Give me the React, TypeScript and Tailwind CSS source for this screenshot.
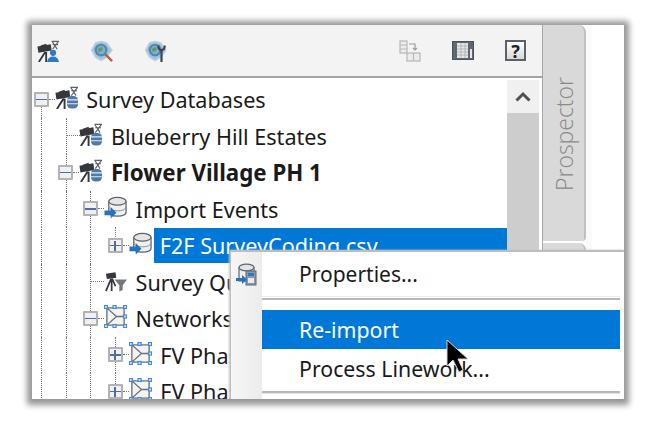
import React from "react";
import { clsx } from "clsx";

const ScopeParts = () => (
  <g>
    <path d="M0.5 7 L15 4.5 L16 11.5 L1.5 14 Z" fill="#34383d" />
    <path d="M4 6 L10 4 L10.5 6 L4.5 7.5 Z" fill="#34383d" />
    <path d="M9 13 L2 24 M10 13 L10 24" stroke="#34383d" strokeWidth="2" fill="none" />
    <path d="M16 1.5 H24 M17 5 H23 M16.5 1.5 L22 10 M23.5 1.5 L17 10" stroke="#5e6267" strokeWidth="1.2" fill="none" />
  </g>
);

const ScopeDbIcon = () => (
  <svg width="23" height="23" viewBox="0 0 24 24" className="shrink-0">
    <ScopeParts />
    <rect x="12.5" y="10.5" width="11.5" height="13" rx="4.5" fill="#4f7aa8" />
    <path d="M12.5 14.5 H24 M12.5 18.5 H24" stroke="#e2ebf4" strokeWidth="1.1" />
  </svg>
);

const ScopeUserIcon = () => (
  <svg width="22" height="22" viewBox="0 0 24 24" className="shrink-0">
    <ScopeParts />
    <circle cx="17.5" cy="14" r="3.4" fill="#2e78c4" />
    <path d="M11 24 Q12 18 17.5 18 Q23 18 24 24 Z" fill="#2e78c4" />
  </svg>
);

const ScopeFilterIcon = () => (
  <svg width="23" height="23" viewBox="0 0 24 24" className="shrink-0">
    <path d="M2 5 L12 3.5 L12.8 9 L3 10.5 Z" fill="#34383d" />
    <path d="M7.5 10 L2 23 M8 10 L8 23 M8.5 10 L12 18" stroke="#34383d" strokeWidth="1.8" fill="none" />
    <path d="M11 11 H24 L19.5 17 V22 L16 23.5 V17 Z" fill="#74787d" />
  </svg>
);

const DbArrowIcon = () => (
  <svg width="23" height="23" viewBox="0 0 24 24" className="shrink-0">
    <path d="M5 5 V17 Q5 21 14 21 Q23 21 23 17 V5" fill="#f0f0f0" stroke="#5f6368" strokeWidth="1.3" />
    <ellipse cx="14" cy="5.5" rx="9" ry="4" fill="#e5e5e5" stroke="#5f6368" strokeWidth="1.3" />
    <path d="M5 11.5 Q6 15.5 14 15.5 Q22 15.5 23 11.5" fill="none" stroke="#8a8d91" strokeWidth="1" />
    <path d="M0.5 15 H7 V11.5 L13 17.5 L7 23.5 V20 H0.5 Z" fill="#2672bd" />
  </svg>
);

const NetworkIcon = () => (
  <svg width="23" height="23" viewBox="0 0 24 24" className="shrink-0">
    <path d="M3 3 H21 V21 H3 Z M3 3 L13 12 L3 21 M13 12 H21" fill="#f3f3f3" stroke="#6d7074" strokeWidth="1.4" />
    {[
      [2, 2],
      [11, 2],
      [22, 2],
      [22, 12],
      [22, 22],
      [11, 22],
      [2, 22],
    ].map(([cx, cy]) => (
      <rect key={`${cx}-${cy}`} x={cx - 1.6} y={cy - 1.6} width="3.2" height="3.2" fill="#cfe4fa" stroke="#3f8de0" strokeWidth="1.3" />
    ))}
  </svg>
);

const DiamondIcon = ({ wrench }: { wrench?: boolean }) => (
  <svg width="22" height="22" viewBox="0 0 24 24" className="shrink-0">
    <path d="M11 1.5 L17 3 L23 11 L17 19 L11 22.5 L5 19 L0.5 11 L5 3 Z" fill="#a3c2d9" stroke="#bfd3e2" strokeWidth="1.5" strokeLinejoin="round" />
    <circle cx="11" cy="11" r="7" fill="#4f89b2" />
    <circle cx="11" cy="11" r="4.6" fill="#7fb0cf" />
    <path d="M7.5 10 Q10 7 13 8.5 L12 12 L8.5 13 Z" fill="#5d9a68" />
    {wrench ? (
      <path d="M18 10 V24 M14.5 6 Q14.5 11 18 11 Q21.5 11 21.5 6" fill="none" stroke="#3d4650" strokeWidth="2.4" />
    ) : (
      <path d="M15.5 15.5 L23 23" stroke="#b5623a" strokeWidth="2.6" />
    )}
  </svg>
);

const TransferIcon = () => (
  <svg width="22" height="22" viewBox="0 0 22 22" className="shrink-0" fill="#ececec" stroke="#b8b8b8" strokeWidth="1.2">
    <rect x="1" y="1" width="7" height="12" />
    <path d="M1 5 H8 M1 9 H8" />
    <rect x="8" y="13" width="13" height="8" />
    <path d="M14.5 13 V21" />
    <path d="M10 4 H16 V10 M14 8 L16 10 L18 8" fill="none" stroke="#9a9a9a" />
  </svg>
);

const PanelIcon = () => (
  <svg width="22" height="19" viewBox="0 0 22 19" className="shrink-0">
    <rect x="0.5" y="0.5" width="21" height="18" fill="#5f6770" stroke="#4c535b" />
    <rect x="5" y="2" width="11" height="15" fill="#e6e6e6" />
    <path d="M5 5 H16 M5 8 H16 M5 11 H16 M5 14 H16 M9 2 V17 M13 2 V17" stroke="#a8adb2" strokeWidth="0.8" />
    <rect x="18" y="8" width="2" height="9" fill="#e6e6e6" />
  </svg>
);

const MenuDbIcon = () => (
  <svg width="21" height="24" viewBox="0 0 21 24" className="shrink-0">
    <path d="M3 4 V18 H18 V4" fill="#ededed" stroke="#62666b" strokeWidth="1.2" />
    <ellipse cx="10.5" cy="4.5" rx="7.5" ry="3.3" fill="#e3e3e3" stroke="#62666b" strokeWidth="1.2" />
    <rect x="10" y="8" width="10" height="14" fill="#8b97a5" stroke="#5d6873" />
    <rect x="12" y="10" width="6" height="3" fill="#2f78c2" />
    <rect x="12" y="15" width="6" height="5" fill="#e8ecf0" />
    <path d="M0 15 H6 V12 L11 16.5 L6 21 V18 H0 Z" fill="#2672bd" />
  </svg>
);

const Toggle = ({ open }: { open: boolean }) => (
  <div className="relative z-10 ml-[1.5px] flex h-[15px] w-[15px] shrink-0 items-center justify-center rounded-[1px] border-2 border-[#b3b3b3] bg-[#f0f0f0]">
    <div className="relative h-[9px] w-[11px]">
      <div className="absolute left-0 top-[4px] h-[1.5px] w-[11px] bg-[#4a6ea8]" />
      {!open && <div className="absolute left-[4.75px] top-0 h-[10px] w-[1.5px] bg-[#4a6ea8]" />}
    </div>
  </div>
);

const Guide = () => (
  <div className="h-full w-[24.7px] shrink-0 pl-[9px]">
    <div className="h-full border-l border-dotted border-[#777]" />
  </div>
);

type RowProps = {
  depth: number;
  toggle?: "open" | "closed";
  line?: "full" | "top" | "bottom";
  icon: React.ReactNode;
  label: string;
  bold?: boolean;
  selected?: boolean;
};

const Row = ({ depth, toggle, line = "full", icon, label, bold, selected }: RowProps) => (
  <div className="flex h-[36.5px] shrink-0 items-center">
    {Array.from({ length: depth }).map((_, i) => (
      <Guide key={i} />
    ))}
    <div className="relative flex h-full w-[24.7px] shrink-0 items-center">
      <div
        className={clsx(
          "absolute left-[9px] border-l border-dotted border-[#777]",
          line === "full" && "inset-y-0",
          line === "top" && "top-0 h-1/2",
          line === "bottom" && "bottom-0 h-1/2"
        )}
      />
      {toggle ? (
        <>
          <Toggle open={toggle === "open"} />
          <div className="w-[6px] border-t border-dotted border-[#777]" />
        </>
      ) : (
        <div className="ml-[10px] w-[13px] border-t border-dotted border-[#777]" />
      )}
    </div>
    <div className="-ml-[2px] -mt-[3px] shrink-0">{icon}</div>
    <div
      className={clsx(
        "flex h-[35px] items-center whitespace-nowrap pt-[2px] leading-none",
        bold ? "text-[22.3px]" : "text-[21.6px]",
        selected ? "ml-[2px] flex-1 bg-[#0078d7] pl-[6px] text-white" : "ml-[8.5px] text-[#1a1a1a]",
        bold && "font-bold"
      )}
    >
      {label}
    </div>
  </div>
);

const MenuItem = ({ label, active }: { label: string; active?: boolean }) => (
  <div
    className={clsx(
      "flex h-[39px] shrink-0 items-center pl-[37px] text-[21.3px] leading-none",
      active ? "bg-[#0078d7] text-white" : "text-[#1a1a1a]"
    )}
  >
    {label}
  </div>
);

export default function App() {
  return (
    <div className="h-[426px] w-[651px] overflow-hidden bg-white pl-[32px] pt-[25px] font-['Noto_Sans','Open_Sans',sans-serif]">
      <div className="relative flex h-[374px] w-[592px] overflow-hidden bg-white shadow-[0_1px_6px_5px_#969696]">
        <div className="flex w-[511px] shrink-0 flex-col border-r border-[#a6a6a6]">
          <div className="flex h-[53px] shrink-0 items-center justify-between border-b-2 border-[#a3a3a3] bg-[#f3f3f3] pl-[5px] pr-[16px]">
            <div className="flex items-center gap-[32px]">
              <ScopeUserIcon />
              <DiamondIcon />
              <DiamondIcon wrench />
            </div>
            <div className="flex items-center gap-[31px]">
              <TransferIcon />
              <PanelIcon />
              <div className="flex h-[21px] w-[21px] shrink-0 items-center justify-center border-2 border-[#5c6167] bg-gradient-to-b from-white to-[#d8d8d8] text-[18px] font-bold leading-none text-[#222]">
                ?
              </div>
            </div>
          </div>
          <div className="flex min-h-0 flex-1">
            <div className="flex min-w-0 flex-1 flex-col overflow-hidden pt-[3px]">
              <Row depth={0} toggle="open" line="bottom" icon={<ScopeDbIcon />} label="Survey Databases" />
              <Row depth={1} icon={<ScopeDbIcon />} label="Blueberry Hill Estates" />
              <Row depth={1} toggle="open" icon={<ScopeDbIcon />} label="Flower Village PH 1" bold />
              <Row depth={2} toggle="open" icon={<DbArrowIcon />} label="Import Events" />
              <Row depth={3} toggle="closed" line="top" icon={<DbArrowIcon />} label="F2F SurveyCoding.csv" selected />
              <Row depth={2} icon={<ScopeFilterIcon />} label="Survey Queries" />
              <Row depth={2} toggle="open" icon={<NetworkIcon />} label="Networks" />
              <Row depth={3} toggle="closed" icon={<NetworkIcon />} label="FV Phase 1" />
              <Row depth={3} toggle="closed" icon={<NetworkIcon />} label="FV Phase 2" />
            </div>
            <div className="mr-[3px] flex w-[32px] shrink-0 flex-col pt-[2px]">
              <div className="flex h-[33px] shrink-0 items-center justify-center bg-[#f0f0f0]">
                <svg width="16" height="11" viewBox="0 0 16 11">
                  <path d="M1.5 9.5 L8 3 L14.5 9.5" fill="none" stroke="#505050" strokeWidth="3" />
                </svg>
              </div>
              <div className="flex-1 bg-[#cdcdcd]" />
            </div>
          </div>
        </div>
        <div className="flex w-[43px] shrink-0 flex-col gap-[2px]">
          <div className="flex h-[216px] shrink-0 items-start justify-center rounded-br-[4px] rounded-tr-[7px] border-r-2 border-[#c0c0c0] bg-[#d9d9d9] pl-[2px] pt-[52px]">
            <div className="rotate-180 whitespace-nowrap font-['Open_Sans',sans-serif] text-[23px] font-light leading-none text-[#8a8a8a] [writing-mode:vertical-rl]">
              Prospector
            </div>
          </div>
          <div className="flex-1 rounded-tr-[7px] border-r-2 border-[#c0c0c0] bg-[#d9d9d9]" />
        </div>
        <div className="w-[6px] shrink-0 bg-[#fafafa]" />

        <div className="absolute bottom-0 left-[198px] right-0 top-[225px] flex border-l border-t-2 border-[#bdbdbd] bg-white shadow-[-1px_0_2px_#c4c4c4]">
          <div className="flex w-[31px] shrink-0 justify-center bg-gradient-to-r from-[#f6f6f6] to-[#ececec] pt-[11px]">
            <MenuDbIcon />
          </div>
          <div className="flex min-w-0 flex-1 flex-col pr-[4px]">
            <div className="flex h-[44px] shrink-0 items-center pl-[37px] text-[21px] leading-none text-[#1a1a1a]">
              Properties...
            </div>
            <div className="h-[4px] shrink-0 border-b-2 border-t border-b-[#b8b8b8] border-t-[#ececec]" />
            <div className="h-[10px] shrink-0" />
            <MenuItem label="Re-import" active />
            <MenuItem label="Process Linework..." />
            <div className="mt-[3px] h-[3px] shrink-0 border-b border-t-2 border-b-[#e4e4e4] border-t-[#b8b8b8]" />
          </div>
          {/* mouse pointer sits on top of the menu */}
          <svg width="26" height="36" viewBox="0 0 26 36" className="absolute left-[215px] top-[87px]">
            <path d="M1 1 L1 27 L7 21 L13 33 L17 31 L12 20 L22 20 Z" fill="#000" stroke="#d0d0d0" strokeWidth="1" />
          </svg>
        </div>
      </div>
    </div>
  );
}
